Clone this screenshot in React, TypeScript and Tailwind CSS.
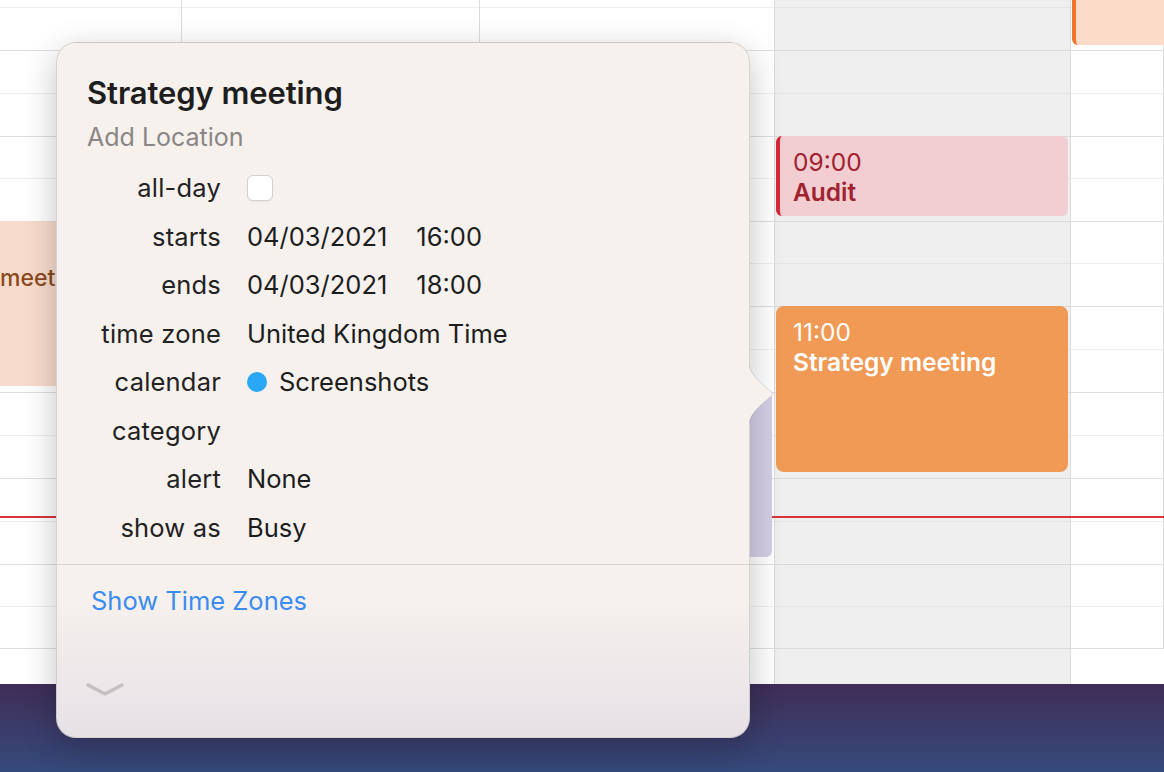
import React from 'react';

type Row = { h: string; strong: boolean };

const hourRows: Row[] = [
  { h: 'h-[8px]', strong: false },
  { h: 'h-[43px]', strong: true },
  { h: 'h-[43px]', strong: false },
  { h: 'h-[43px]', strong: true },
  { h: 'h-[42px]', strong: false },
  { h: 'h-[43px]', strong: true },
  { h: 'h-[42px]', strong: false },
  { h: 'h-[43px]', strong: true },
  { h: 'h-[43px]', strong: false },
  { h: 'h-[43px]', strong: true },
  { h: 'h-[43px]', strong: false },
  { h: 'h-[43px]', strong: true },
  { h: 'h-[43px]', strong: false },
  { h: 'h-[43px]', strong: true },
  { h: 'h-[42px]', strong: false },
  { h: 'h-[42px]', strong: true },
];

function DayColumn({ width, gray }: { width: string; gray?: boolean }) {
  return (
    <div
      className={`flex flex-col shrink-0 border-r border-[#dcdcdc] ${width} ${gray ? 'bg-[#efefef]' : 'bg-white'}`}
    >
      {hourRows.map((r, i) => (
        <div
          key={i}
          className={`${r.h} shrink-0 border-b ${
            r.strong
              ? gray
                ? 'border-[#dadada]'
                : 'border-[#dedede]'
              : gray
                ? 'border-[#e5e5e5]'
                : 'border-[#efefef]'
          }`}
        />
      ))}
      <div className="flex-1" />
    </div>
  );
}

const details: { label: string; value: React.ReactNode }[] = [
  {
    label: 'all-day',
    value: (
      <div className="w-[26px] h-[26px] rounded-[6px] bg-white border border-[#d3cfcc] shadow-[0_1px_1px_rgba(0,0,0,0.05)]" />
    ),
  },
  {
    label: 'starts',
    value: (
      <div className="flex gap-[29px]">
        <span>04/03/2021</span>
        <span>16:00</span>
      </div>
    ),
  },
  {
    label: 'ends',
    value: (
      <div className="flex gap-[29px]">
        <span>04/03/2021</span>
        <span>18:00</span>
      </div>
    ),
  },
  { label: 'time zone', value: 'United Kingdom Time' },
  {
    label: 'calendar',
    value: (
      <div className="flex items-center gap-[12px]">
        <span className="w-[20px] h-[20px] rounded-full bg-[#2ba8f5]" />
        <span>Screenshots</span>
      </div>
    ),
  },
  { label: 'category', value: '' },
  { label: 'alert', value: 'None' },
  { label: 'show as', value: 'Busy' },
];

function EventPopover() {
  return (
    <div className="absolute left-[56px] top-[42px] w-[694px] h-[696px] z-20">
      <div className="relative w-full h-full rounded-[20px] border border-[rgba(0,0,0,0.12)] bg-linear-to-b from-[#f6f1ed] from-80% to-[#e6e1e6] shadow-[0_10px_34px_rgba(0,0,0,0.24)] flex flex-col">
        <div className="pl-[30px] pt-[32px]">
          <h1 className="text-[31px] leading-[36px] font-semibold text-[#1e1e1e] tracking-[-0.1px]">
            Strategy meeting
          </h1>
          <p className="mt-[10px] text-[25px] leading-[32px] text-[#8a8685]">Add Location</p>
        </div>

        <div className="mt-[11px] pl-[30px] flex flex-col text-[25.5px] text-[#1d1d1d]">
          {details.map((d) => (
            <div key={d.label} className="h-[48.5px] flex items-center">
              <div className="w-[134px] text-right text-[#222222] tracking-[0.2px]">{d.label}</div>
              <div className="ml-[26px] flex items-center">{d.value}</div>
            </div>
          ))}
        </div>

        <div className="mt-[12px] border-t border-[#d8d3d0]" />

        <div className="pl-[34px] mt-[20px] text-[25.5px] leading-[32px] text-[#3b8cf0]">
          Show Time Zones
        </div>

        <div className="pl-[29px] mt-[65px]">
          <svg width="38" height="16" viewBox="0 0 38 16" fill="none">
            <path
              d="M2 3 L19 12 L36 3"
              stroke="#c3bfc2"
              strokeWidth="3.2"
              strokeLinecap="round"
              strokeLinejoin="round"
            />
          </svg>
        </div>

        <svg
          className="absolute left-[692px] top-[322px]"
          width="28"
          height="58"
          viewBox="0 0 28 58"
          fill="none"
        >
          <path
            d="M0 0 C2 8 6 12 12 18 L23 27.5 Q25.5 29 23 30.5 L12 40 C6 46 2 50 0 58 Z"
            fill="#f6f1ed"
          />
          <path
            d="M0 0 C2 8 6 12 12 18 L23 27.5 Q25.5 29 23 30.5 L12 40 C6 46 2 50 0 58"
            stroke="rgba(0,0,0,0.12)"
            strokeWidth="1"
          />
        </svg>
      </div>
    </div>
  );
}

export default function App() {
  return (
    <div className="relative w-[1164px] h-[772px] overflow-hidden bg-white font-['Inter','Noto_Sans',sans-serif]">
      <div className="flex h-[684px]">
        <DayColumn width="w-[182px]" />
        <DayColumn width="w-[298px]" />
        <DayColumn width="w-[295px]" />
        <DayColumn width="w-[296px]" gray />
        <div className="flex-1">
          <DayColumn width="w-full" />
        </div>
      </div>
      <div className="h-[88px] bg-linear-to-b from-[#3e2d57] to-[#344a7c]" />

      {/* now line */}
      <div className="absolute left-0 right-0 top-[516px] h-[2px] bg-[#d8343b]" />

      {/* events */}
      <div className="absolute left-[1072px] top-0 w-[92px] h-[45px] bg-[#fcdcc9] border-l-4 border-[#ef772c] rounded-bl-[6px]" />

      <div className="absolute left-[-120px] top-[221px] w-[300px] h-[165px] bg-[#f7dccd] rounded-[6px]">
        <div className="pt-[40px] pl-[120px] text-[23px] font-medium text-[#8b4a1d]">meeting</div>
      </div>

      <div className="absolute left-[600px] top-[392px] w-[172px] h-[165px] bg-[#d4cee6] rounded-[6px]" />

      <div className="absolute left-[776px] top-[136px] w-[292px] h-[80px] bg-[#f2cdd2] border-l-4 border-[#d42a3a] rounded-[6px] pl-[13px] pt-[11px] text-[24.5px] leading-[30px] text-[#a1222e]">
        <div>09:00</div>
        <div className="font-semibold">Audit</div>
      </div>

      <div className="absolute left-[776px] top-[306px] w-[292px] h-[166px] bg-[#f09a55] rounded-[8px] pl-[17px] pt-[11px] text-[24.5px] leading-[30px] text-white">
        <div>11:00</div>
        <div className="font-semibold">Strategy meeting</div>
      </div>

      <EventPopover />
    </div>
  );
}
